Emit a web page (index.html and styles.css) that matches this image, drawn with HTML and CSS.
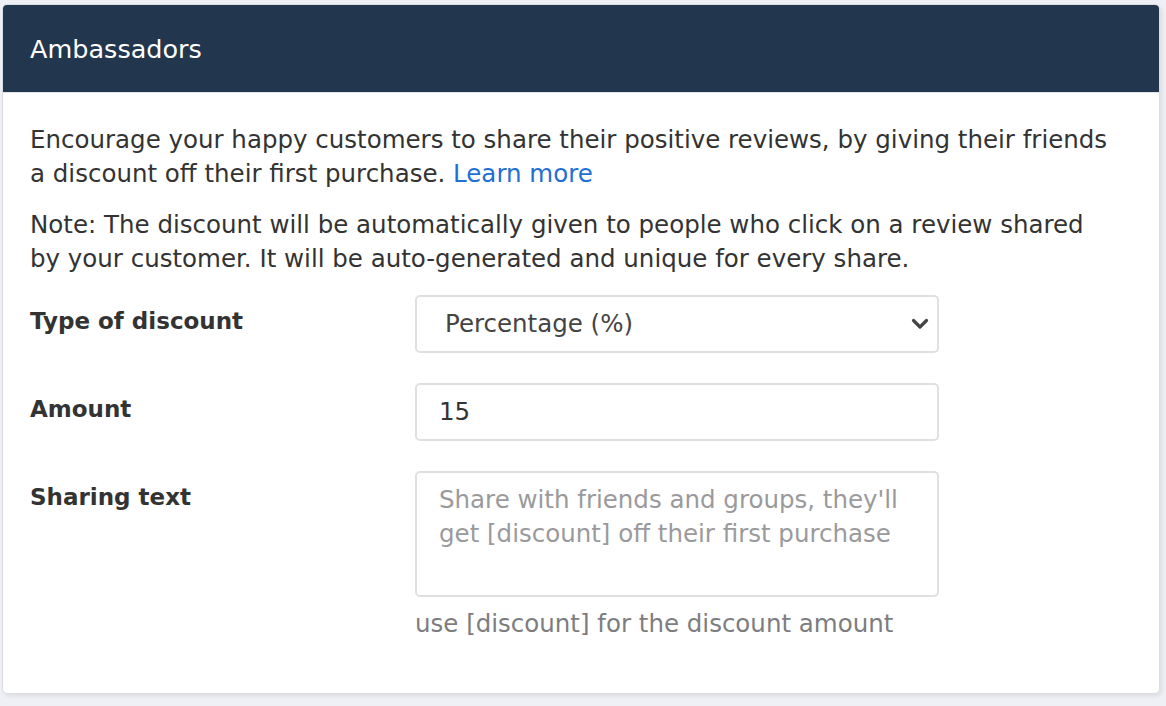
FILE: index.html
```html
<!DOCTYPE html>
<html lang="en">
<head>
<meta charset="utf-8">
<title>Ambassadors</title>
<link rel="stylesheet" href="styles.css">
</head>
<body>
<div class="card">
  <div class="card-header">Ambassadors</div>
  <div class="card-body">
    <p class="intro">Encourage your happy customers to share their positive reviews, by giving their friends a discount off their first purchase. <a href="#" class="link">Learn more</a></p>
    <p class="note">Note: The discount will be automatically given to people who click on a review shared by your customer. It will be auto-generated and unique for every share.</p>
    <div class="form-row">
      <label class="label">Type of discount</label>
      <div class="field">
        <div class="select">
          <span class="select-value">Percentage (%)</span>
          <svg class="chevron" width="18" height="12" viewBox="0 0 18 12"><path d="M2.5 2.5 L9 9 L15.5 2.5" fill="none" stroke="#444" stroke-width="3.2" stroke-linecap="round" stroke-linejoin="round"/></svg>
        </div>
      </div>
    </div>
    <div class="form-row">
      <label class="label">Amount</label>
      <div class="field">
        <div class="input">15</div>
      </div>
    </div>
    <div class="form-row">
      <label class="label">Sharing text</label>
      <div class="field">
        <div class="textarea"><span class="placeholder">Share with friends and groups, they'll get [discount] off their first purchase</span></div>
        <div class="help">use [discount] for the discount amount</div>
      </div>
    </div>
  </div>
</div>
</body>
</html>
```
FILE: styles.css
```css
html, body {
  margin: 0;
  padding: 0;
}
body {
  background: #eff0f5;
  font-family: "DejaVu Sans", "Open Sans", sans-serif;
  color: #333;
  width: 1166px;
  height: 706px;
  overflow: hidden;
}
.card {
  margin: 4px 0 0 2px;
  width: 1158px;
  height: 690px;
  box-sizing: border-box;
  background: #fff;
  border: 1px solid #dcdde2;
  border-radius: 5px;
  box-shadow: 2px 2px 4px rgba(0,0,0,0.08);
  overflow: hidden;
}
.card-header {
  background: #22364e;
  color: #fff;
  font-size: 25.5px;
  line-height: 32px;
  padding: 28px 27px 27px;
  border-bottom: 1px solid #e3e5ea;
}
.card-body {
  padding: 30px 42px 0 27px;
  font-size: 24.5px;
  line-height: 34px;
}
.intro {
  margin: 0 0 17px;
}
.note {
  margin: 0 0 19px;
}
.link {
  color: #1f6fd6;
  text-decoration: none;
}
.form-row {
  display: grid;
  grid-template-columns: 385px 524px;
  margin-bottom: 30px;
}
.label {
  font-weight: 700;
  font-size: 23px;
  padding-top: 9px;
}
.select, .input, .textarea {
  box-sizing: border-box;
  border: 2px solid #e0e0e3;
  border-radius: 5px;
  background: #fff;
}
.select {
  height: 58px;
  display: flex;
  align-items: center;
  justify-content: space-between;
  padding: 0 8px 0 28px;
  color: #444;
}
.chevron {
  display: block;
}
.input {
  height: 58px;
  display: flex;
  align-items: center;
  padding: 0 22px;
  color: #333;
}
.textarea {
  height: 126px;
  padding: 10px 22px;
}
.placeholder {
  color: #9a9a9c;
}
.help {
  margin-top: 10px;
  color: #7d7d80;
}
```
